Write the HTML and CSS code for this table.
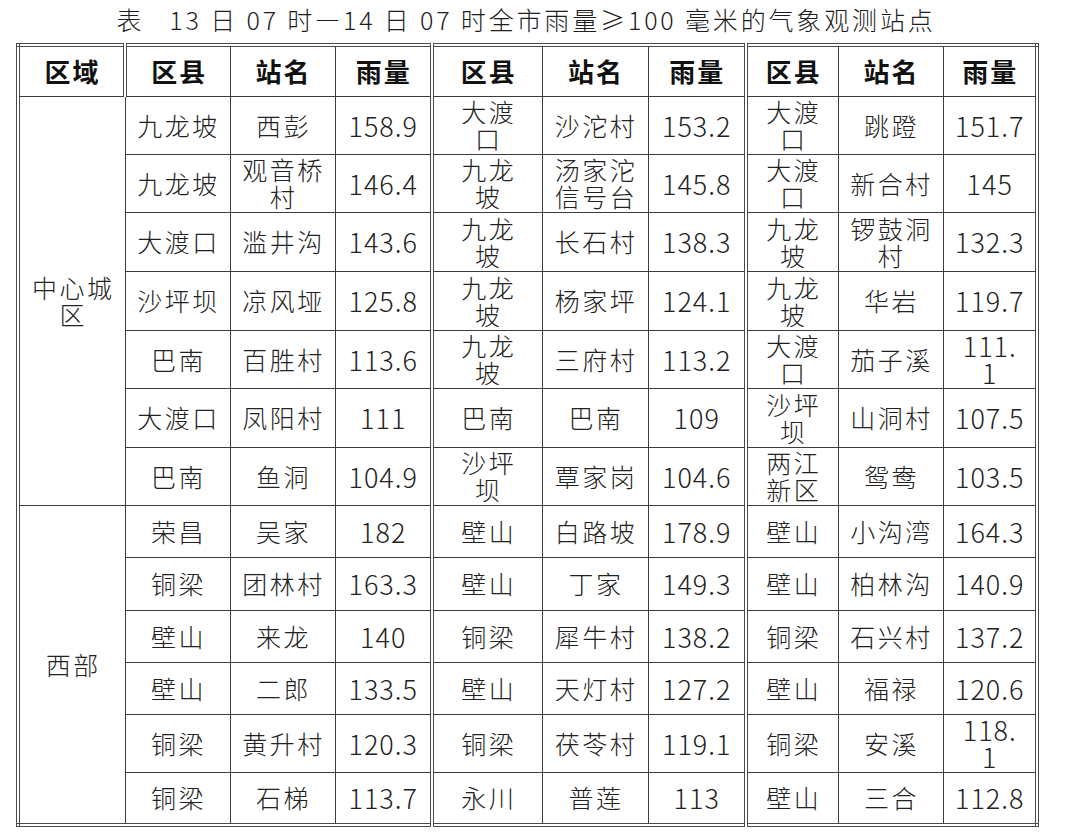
FILE: index.html
```html
<!DOCTYPE html>
<html lang="zh-CN">
<head>
<meta charset="utf-8">
<title>13日07时—14日07时全市雨量≥100毫米的气象观测站点</title>
<link rel="stylesheet" href="styles.css">
</head>
<body>
<div class="sheet">
  <div class="title">表&nbsp;&nbsp; 13 日 07 时—14 日 07 时全市雨量≥100 毫米的气象观测站点</div>
  <table class="rain">
    <colgroup>
      <col class="w107"><col class="w105"><col class="w105"><col class="w97">
      <col class="w110"><col class="w106"><col class="w98">
      <col class="w92"><col class="w105"><col class="w94">
    </colgroup>
    <thead>
      <tr class="hd">
        <th class="sep">区域</th><th>区县</th><th>站名</th><th class="sep">雨量</th>
        <th>区县</th><th>站名</th><th class="sep">雨量</th>
        <th>区县</th><th>站名</th><th>雨量</th>
      </tr>
    </thead>
    <tbody>
      <tr class="h58">
        <td class="region" rowspan="7">中心城<br>区</td>
        <td>九龙坡</td><td>西彭</td><td class="num sep">158.9</td>
        <td>大渡<br>口</td><td>沙沱村</td><td class="num sep">153.2</td>
        <td>大渡<br>口</td><td>跳蹬</td><td class="num">151.7</td>
      </tr>
      <tr class="h58">
        <td>九龙坡</td><td>观音桥<br>村</td><td class="num sep">146.4</td>
        <td>九龙<br>坡</td><td>汤家沱<br>信号台</td><td class="num sep">145.8</td>
        <td>大渡<br>口</td><td>新合村</td><td class="num">145</td>
      </tr>
      <tr class="h59">
        <td>大渡口</td><td>滥井沟</td><td class="num sep">143.6</td>
        <td>九龙<br>坡</td><td>长石村</td><td class="num sep">138.3</td>
        <td>九龙<br>坡</td><td>锣鼓洞<br>村</td><td class="num">132.3</td>
      </tr>
      <tr class="h59">
        <td>沙坪坝</td><td>凉风垭</td><td class="num sep">125.8</td>
        <td>九龙<br>坡</td><td>杨家坪</td><td class="num sep">124.1</td>
        <td>九龙<br>坡</td><td>华岩</td><td class="num">119.7</td>
      </tr>
      <tr class="h58">
        <td>巴南</td><td>百胜村</td><td class="num sep">113.6</td>
        <td>九龙<br>坡</td><td>三府村</td><td class="num sep">113.2</td>
        <td>大渡<br>口</td><td>茄子溪</td><td class="num">111.<br>1</td>
      </tr>
      <tr class="h59">
        <td>大渡口</td><td>凤阳村</td><td class="num sep">111</td>
        <td>巴南</td><td>巴南</td><td class="num sep">109</td>
        <td>沙坪<br>坝</td><td>山洞村</td><td class="num">107.5</td>
      </tr>
      <tr class="h58">
        <td>巴南</td><td>鱼洞</td><td class="num sep">104.9</td>
        <td>沙坪<br>坝</td><td>覃家岗</td><td class="num sep">104.6</td>
        <td>两江<br>新区</td><td>鸳鸯</td><td class="num">103.5</td>
      </tr>
      <tr class="h52">
        <td class="region" rowspan="6">西部</td>
        <td>荣昌</td><td>吴家</td><td class="num sep">182</td>
        <td>壁山</td><td>白路坡</td><td class="num sep">178.9</td>
        <td>壁山</td><td>小沟湾</td><td class="num">164.3</td>
      </tr>
      <tr class="h53">
        <td>铜梁</td><td>团林村</td><td class="num sep">163.3</td>
        <td>壁山</td><td>丁家</td><td class="num sep">149.3</td>
        <td>壁山</td><td>柏林沟</td><td class="num">140.9</td>
      </tr>
      <tr class="h52">
        <td>壁山</td><td>来龙</td><td class="num sep">140</td>
        <td>铜梁</td><td>犀牛村</td><td class="num sep">138.2</td>
        <td>铜梁</td><td>石兴村</td><td class="num">137.2</td>
      </tr>
      <tr class="h52">
        <td>壁山</td><td>二郎</td><td class="num sep">133.5</td>
        <td>壁山</td><td>天灯村</td><td class="num sep">127.2</td>
        <td>壁山</td><td>福禄</td><td class="num">120.6</td>
      </tr>
      <tr class="h58">
        <td>铜梁</td><td>黄升村</td><td class="num sep">120.3</td>
        <td>铜梁</td><td>茯苓村</td><td class="num sep">119.1</td>
        <td>铜梁</td><td>安溪</td><td class="num">118.<br>1</td>
      </tr>
      <tr class="h53">
        <td>铜梁</td><td>石梯</td><td class="num sep">113.7</td>
        <td>永川</td><td>普莲</td><td class="num sep">113</td>
        <td>壁山</td><td>三合</td><td class="num">112.8</td>
      </tr>
    </tbody>
  </table>
</div>
</body>
</html>
```
FILE: styles.css
```css
html, body {
  margin: 0;
  padding: 0;
  background: #ffffff;
}

body {
  font-family: "Noto Sans CJK SC", "Noto Sans", sans-serif;
  color: #222222;
}

.sheet {
  width: 1020px;
  margin-left: 16px;
}

.title {
  height: 43px;
  line-height: 39px;
  text-align: center;
  font-size: 25px;
  font-weight: 300;
  letter-spacing: 2.85px;
  white-space: pre;
  color: #1e1e1e;
}

.rain {
  width: 1020px;
  border-collapse: collapse;
  table-layout: fixed;
  border: 4px double #4a4a4a;
}

.w107 { width: 107px; }
.w105 { width: 105px; }
.w97  { width: 97px; }
.w110 { width: 110px; }
.w106 { width: 106px; }
.w98  { width: 98px; }
.w92  { width: 92px; }
.w94  { width: 94px; }

.rain th,
.rain td {
  border: 1px solid #3c3c3c;
  padding: 0 0 0 2px;
  text-align: center;
  vertical-align: middle;
}

.rain th {
  font-size: 26px;
  font-weight: 700;
  letter-spacing: 2px;
  line-height: 30px;
  color: #111111;
}

.rain td {
  font-size: 25px;
  font-weight: 300;
  letter-spacing: 2.5px;
  line-height: 27px;
  color: #222222;
}

.rain td.num {
  font-size: 27px;
  letter-spacing: 1px;
  padding-left: 1px;
}

.rain .sep {
  border-right: 4px double #4a4a4a;
}

.rain td.region {
  border-right: 1px solid #3c3c3c;
}

.hd  { height: 51px; }
.h58 { height: 58px; }
.h59 { height: 59px; }
.h52 { height: 52px; }
.h53 { height: 53px; }
```
